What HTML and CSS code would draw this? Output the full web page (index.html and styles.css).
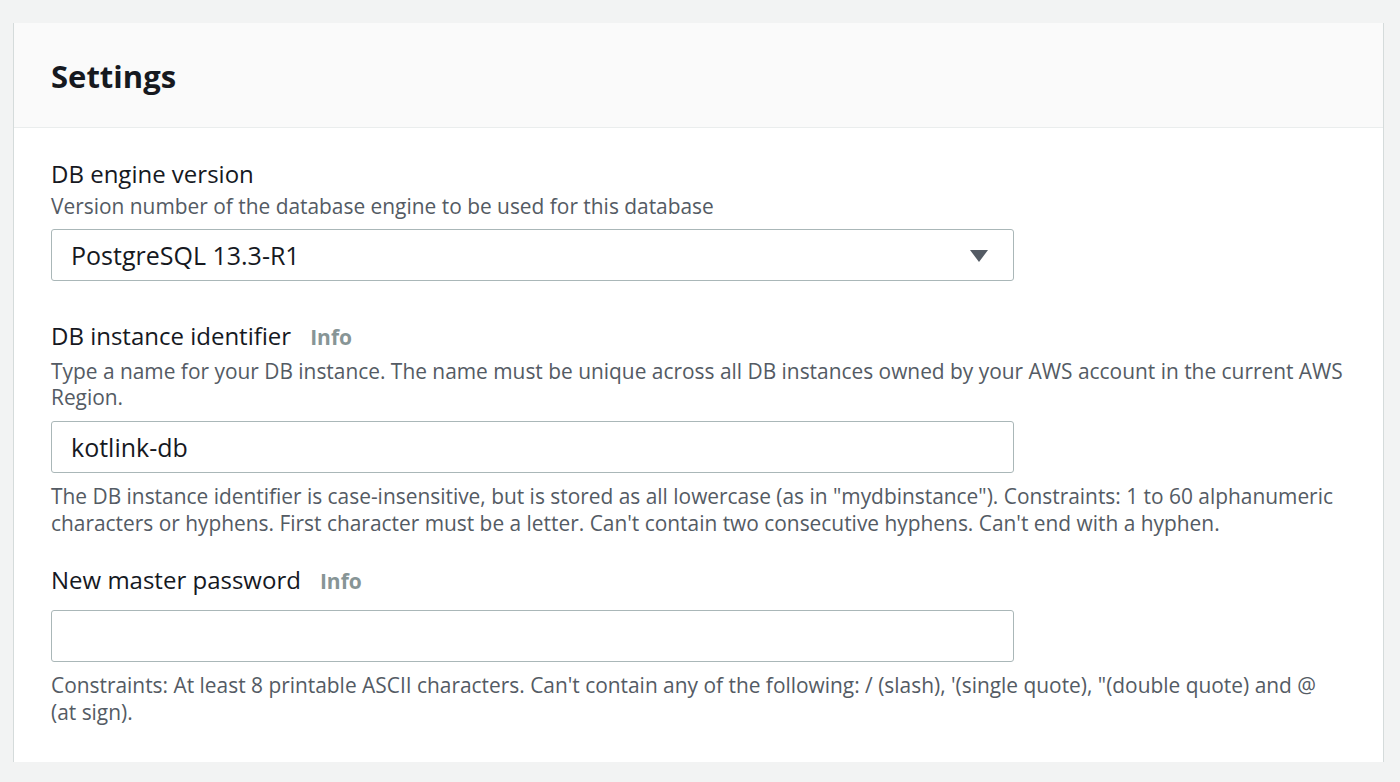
FILE: index.html
```html
<!DOCTYPE html>
<html>
<head>
<meta charset="utf-8">
<link rel="stylesheet" href="styles.css">
</head>
<body>
<div class="card">
  <div class="card-header"><h2>Settings</h2></div>
  <div class="card-body">
    <div class="field">
      <div class="label">DB engine version</div>
      <div class="desc">Version number of the database engine to be used for this database</div>
      <div class="select">
        <span>PostgreSQL 13.3-R1</span>
        <svg class="caret" width="18" height="14" viewBox="0 0 18 14"><polygon points="0,1 18,1 9,13" fill="#545b64"/></svg>
      </div>
    </div>
    <div class="field field-2">
      <div class="label">DB instance identifier <a class="info">Info</a></div>
      <div class="desc">Type a name for your DB instance. The name must be unique across all DB instances owned by your AWS account in the current AWS Region.</div>
      <div class="input">kotlink-db</div>
      <div class="constraint">The DB instance identifier is case-insensitive, but is stored as all lowercase (as in "mydbinstance"). Constraints: 1 to 60 alphanumeric characters or hyphens. First character must be a letter. Can't contain two consecutive hyphens. Can't end with a hyphen.</div>
    </div>
    <div class="field field-3">
      <div class="label">New master password <a class="info">Info</a></div>
      <div class="input input-empty"></div>
      <div class="constraint">Constraints: At least 8 printable ASCII characters. Can't contain any of the following: / (slash), '(single quote), "(double quote) and @ (at sign).</div>
    </div>
  </div>
</div>
</body>
</html>
```

FILE: styles.css
```css
html, body {
  margin: 0;
  padding: 0;
}
body {
  background: #f2f3f3;
  padding: 23px 16px 0 13px;
  font-family: "Open Sans", "Noto Sans", sans-serif;
  color: #16191f;
}
.card {
  background: #ffffff;
  width: 1371px;
  box-sizing: border-box;
  border-left: 1px solid #d5dbdb;
  border-right: 1px solid #d5dbdb;
  box-shadow: 0 2px 1px -1px rgba(0, 28, 36, 0.4);
}
.card-header {
  background: #fafafa;
  height: 105px;
  border-bottom: 1px solid #eaeded;
  display: flex;
  align-items: center;
  padding-left: 37px;
  padding-top: 2px;
  box-sizing: border-box;
}
.card-header h2 {
  margin: 0;
  font-size: 31px;
  font-weight: 700;
  line-height: 36px;
  color: #16191f;
}
.card-body {
  padding: 31px 37px 36px;
}
.label {
  font-size: 24px;
  line-height: 30px;
  color: #16191f;
  display: flex;
  align-items: baseline;
}
.info {
  font-size: 21px;
  font-weight: 700;
  color: #879596;
  margin-left: 19px;
}
.desc {
  font-size: 20.9px;
  line-height: 26px;
  color: #545b64;
  margin-top: 4px;
}
.field-2 .desc {
  margin-top: 6px;
}
.select, .input {
  box-sizing: border-box;
  width: 963px;
  height: 52px;
  border: 1px solid #aab7b8;
  border-radius: 3px;
  display: flex;
  align-items: center;
  padding: 0 20px 0 19px;
  font-size: 25px;
  color: #16191f;
  margin-top: 10px;
}
.select {
  justify-content: space-between;
}
.caret {
  margin-right: 5px;
  margin-top: 2px;
}
.field-2 {
  margin-top: 40px;
}
.field-2 .input {
  margin-top: 11px;
}
.constraint {
  font-size: 20.9px;
  line-height: 27px;
  color: #545b64;
  margin-top: 10px;
}
.field-3 {
  margin-top: 28px;
}
.field-3 .input {
  margin-top: 14px;
}
```
